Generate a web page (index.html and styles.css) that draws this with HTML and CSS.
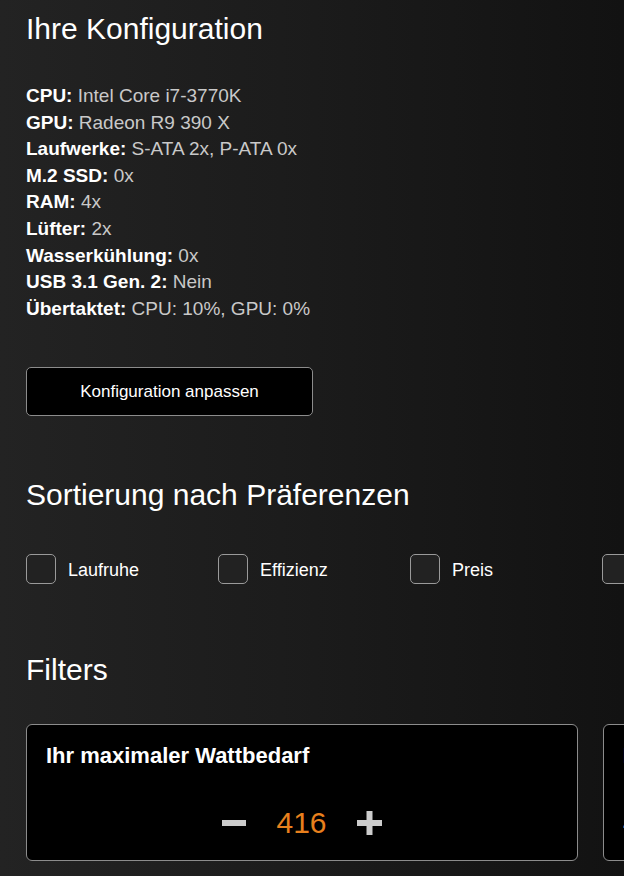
FILE: index.html
```html
<!DOCTYPE html>
<html lang="de">
<head>
<meta charset="utf-8">
<title>Ihre Konfiguration</title>
<link rel="stylesheet" href="styles.css">
</head>
<body>
<main class="page">
  <section class="config">
    <h1 class="section-title">Ihre Konfiguration</h1>
    <ul class="spec-list">
      <li><b class="spec-label">CPU:</b> Intel Core i7-3770K</li>
      <li><b class="spec-label">GPU:</b> Radeon R9 390 X</li>
      <li><b class="spec-label">Laufwerke:</b> S-ATA 2x, P-ATA 0x</li>
      <li><b class="spec-label">M.2 SSD:</b> 0x</li>
      <li><b class="spec-label">RAM:</b> 4x</li>
      <li><b class="spec-label">Lüfter:</b> 2x</li>
      <li><b class="spec-label">Wasserkühlung:</b> 0x</li>
      <li><b class="spec-label">USB 3.1 Gen. 2:</b> Nein</li>
      <li><b class="spec-label">Übertaktet:</b> CPU: 10%, GPU: 0%</li>
    </ul>
    <button class="btn-outline" type="button">Konfiguration anpassen</button>
  </section>

  <section class="prefs">
    <h2 class="section-title">Sortierung nach Präferenzen</h2>
    <div class="pref-row">
      <label class="pref"><span class="pref-box"></span><span class="pref-text">Laufruhe</span></label>
      <label class="pref"><span class="pref-box"></span><span class="pref-text">Effizienz</span></label>
      <label class="pref"><span class="pref-box"></span><span class="pref-text">Preis</span></label>
      <label class="pref"><span class="pref-box"></span><span class="pref-text">Qualität</span></label>
    </div>
  </section>

  <section class="filters">
    <h2 class="section-title">Filters</h2>
    <div class="filter-row">
      <div class="filter-card">
        <h3 class="card-title">Ihr maximaler Wattbedarf</h3>
        <div class="stepper">
          <svg class="step-icon" width="24" height="6" viewBox="0 0 24 6"><rect x="0" y="0" width="24" height="6" fill="#cccccc"/></svg>
          <span class="step-value">416</span>
          <svg class="step-icon" width="25" height="24" viewBox="0 0 25 24"><rect x="0" y="9" width="25" height="6" fill="#cccccc"/><rect x="9.5" y="0" width="6" height="24" fill="#cccccc"/></svg>
        </div>
      </div>
      <div class="filter-card">
        <h3 class="card-title">Ihre maximale Lautstärke</h3>
        <div class="stepper stepper-left">
          <span class="step-text">40 dB</span>
        </div>
      </div>
    </div>
  </section>
</main>
</body>
</html>
```
FILE: styles.css
```css
* { box-sizing: border-box; }

html, body {
  margin: 0;
  padding: 0;
  height: 100%;
}

body {
  background: linear-gradient(to right, #232323 0%, #1c1c1c 45%, #121212 100%);
  color: #ffffff;
  font-family: "Liberation Sans", Arial, Helvetica, sans-serif;
  overflow: hidden;
}

.page {
  padding: 11px 0 0 26px;
  min-height: 876px;
}

.section-title {
  margin: 0;
  font-size: 30px;
  line-height: 36px;
  font-weight: normal;
  color: #ffffff;
}

.spec-list {
  list-style: none;
  margin: 36px 0 0 0;
  padding: 0;
  font-size: 19px;
  line-height: 26.6px;
  color: #c9c9c9;
}

.spec-label {
  color: #ffffff;
  font-weight: bold;
}

.btn-outline {
  display: block;
  margin-top: 45px;
  width: 287px;
  height: 49px;
  background: #000000;
  color: #ffffff;
  border: 1px solid #8c8c8c;
  border-radius: 5px;
  font-family: "Liberation Sans", Arial, Helvetica, sans-serif;
  font-size: 17px;
  padding: 0;
}

.prefs { margin-top: 61px; }

.pref-row {
  display: flex;
  margin-top: 41px;
  height: 30px;
}

.pref {
  flex: 0 0 192px;
  display: flex;
  align-items: center;
  gap: 12px;
}

.pref-box {
  flex: 0 0 30px;
  width: 30px;
  height: 30px;
  background: #222222;
  border: 1px solid #9a9a9a;
  border-radius: 5px;
}

.pref-text {
  font-size: 18px;
  line-height: 22px;
  padding-top: 2px;
  color: #ffffff;
}

.filters { margin-top: 68px; }

.filter-row {
  display: flex;
  gap: 25px;
  margin-top: 36px;
}

.filter-card {
  flex: 0 0 552px;
  background: #000000;
  border: 1px solid #8c8c8c;
  border-radius: 6px;
  padding: 18px 19px 19px 19px;
}

.card-title {
  margin: 0;
  font-size: 22px;
  line-height: 26.4px;
  font-weight: bold;
  color: #ffffff;
}

.stepper {
  display: flex;
  align-items: center;
  justify-content: center;
  gap: 30px;
  margin-top: 35px;
  height: 36px;
}

.stepper-left { justify-content: flex-start; }

.step-icon { display: block; }

.step-value {
  font-size: 30px;
  line-height: 36px;
  color: #e8801d;
}

.step-text {
  font-size: 30px;
  line-height: 36px;
  color: #cccccc;
}
```
